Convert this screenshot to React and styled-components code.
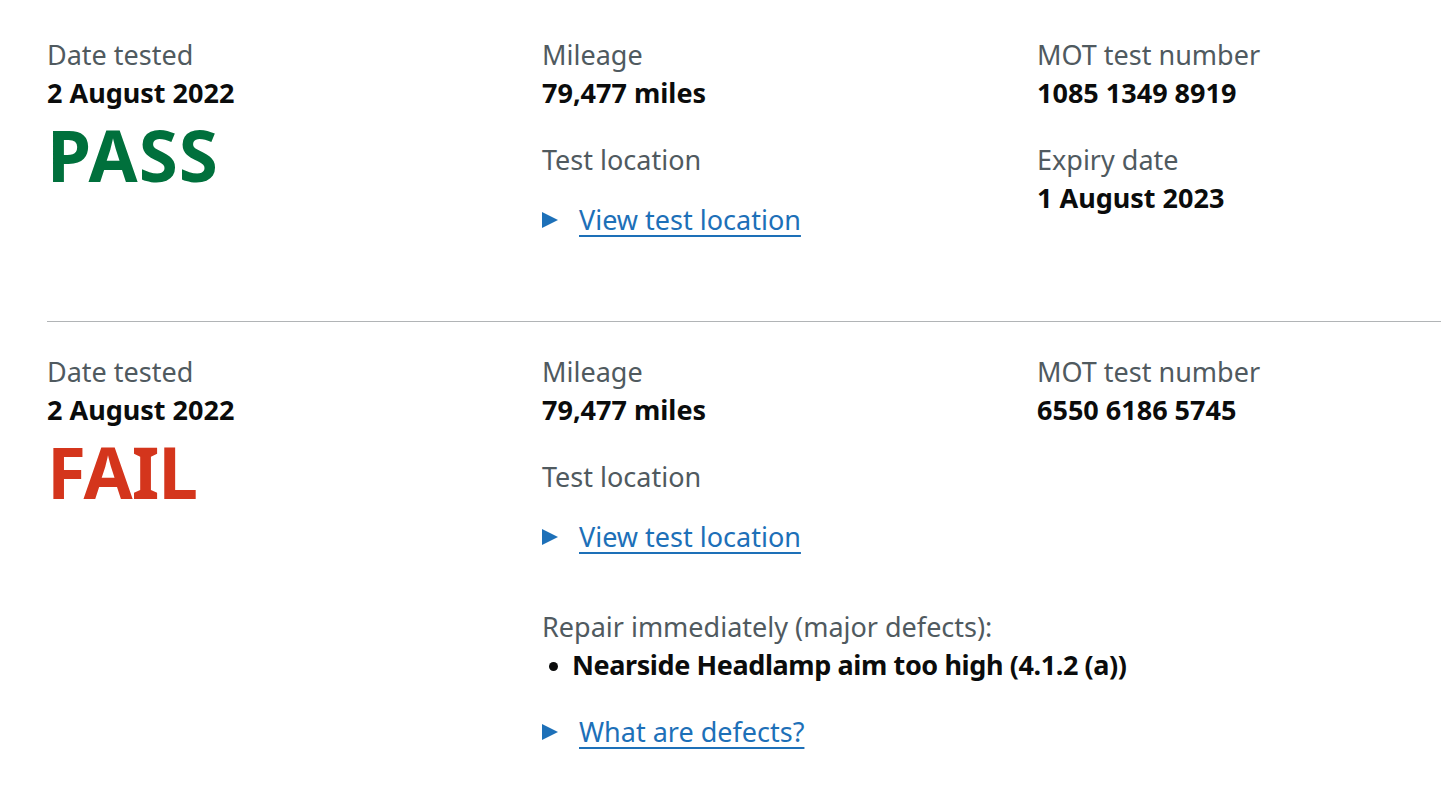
import styled, { createGlobalStyle } from 'styled-components';

const GlobalStyle = createGlobalStyle`
  html, body {
    margin: 0;
    padding: 0;
    background: #ffffff;
    overflow: hidden;
  }
  body {
    font-family: "Noto Sans", Arial, sans-serif;
    color: #0b0c0c;
  }
`;

const Page = styled.div`
  padding: 36px 0 0 47px;
`;

const Result = styled.section`
  display: grid;
  grid-template-columns: 495px 495px 1fr;
  padding-bottom: ${p => (p.$last ? '20px' : '82px')};
  border-bottom: ${p => (p.$last ? 'none' : '1px solid #b1b4b6')};
  margin-bottom: 31px;
`;

const Column = styled.div`
  display: flex;
  flex-direction: column;
  min-width: 0;
`;

const Field = styled.div`
  margin-bottom: 29px;
`;

const Label = styled.div`
  font-size: 27px;
  line-height: 38px;
  color: #505a5f;
  white-space: nowrap;
`;

const Value = styled.div`
  font-size: 27px;
  line-height: 38px;
  font-weight: 700;
  color: #0b0c0c;
  white-space: nowrap;
`;

const Status = styled.div`
  font-size: 71px;
  line-height: 72px;
  font-weight: 700;
  margin-top: 7px;
  letter-spacing: ${p => (p.$pass ? '1px' : '-1px')};
  color: ${p => (p.$pass ? '#00703c' : '#d4351c')};
`;

const Details = styled.div`
  display: flex;
  align-items: center;
  gap: 21px;
  height: 38px;
  margin-top: ${p => p.$gap || '0px'};
  margin-bottom: ${p => p.$after || '0px'};
`;

const Triangle = styled.span`
  flex: none;
  width: 0;
  height: 0;
  border-top: 8.5px solid transparent;
  border-bottom: 8.5px solid transparent;
  border-left: 16px solid #1d70b8;
`;

const Link = styled.a`
  font-size: 27px;
  line-height: 38px;
  color: #1d70b8;
  text-decoration: underline;
  text-decoration-thickness: 2px;
  text-underline-offset: 5px;
  white-space: nowrap;
  cursor: pointer;
`;

const DefectList = styled.ul`
  margin: 0;
  padding: 0 0 0 30px;
  list-style: none;
`;

const Defect = styled.li`
  position: relative;
  font-size: 27px;
  line-height: 38px;
  font-weight: 700;
  letter-spacing: -0.4px;
  white-space: nowrap;
  &::before {
    content: '';
    position: absolute;
    left: -23px;
    top: 16px;
    width: 9px;
    height: 9px;
    border-radius: 50%;
    background: #0b0c0c;
  }
`;

function Reveal({ children, gap, after }) {
  return (
    <Details $gap={gap} $after={after}>
      <Triangle />
      <Link>{children}</Link>
    </Details>
  );
}

export default function App() {
  return (
    <Page>
      <GlobalStyle />
      <Result>
        <Column>
          <Label>Date tested</Label>
          <Value>2 August 2022</Value>
          <Status $pass>PASS</Status>
        </Column>
        <Column>
          <Field>
            <Label>Mileage</Label>
            <Value>79,477 miles</Value>
          </Field>
          <Label>Test location</Label>
          <Reveal gap="22px">View test location</Reveal>
        </Column>
        <Column>
          <Field>
            <Label>MOT test number</Label>
            <Value>1085 1349 8919</Value>
          </Field>
          <Label>Expiry date</Label>
          <Value>1 August 2023</Value>
        </Column>
      </Result>
      <Result $last>
        <Column>
          <Label>Date tested</Label>
          <Value>2 August 2022</Value>
          <Status>FAIL</Status>
        </Column>
        <Column>
          <Field>
            <Label>Mileage</Label>
            <Value>79,477 miles</Value>
          </Field>
          <Label>Test location</Label>
          <Reveal gap="22px" after="52px">View test location</Reveal>
          <Label>Repair immediately (major defects):</Label>
          <DefectList>
            <Defect>Nearside Headlamp aim too high (4.1.2 (a))</Defect>
          </DefectList>
          <Reveal gap="29px">What are defects?</Reveal>
        </Column>
        <Column>
          <Label>MOT test number</Label>
          <Value>6550 6186 5745</Value>
        </Column>
      </Result>
    </Page>
  );
}
